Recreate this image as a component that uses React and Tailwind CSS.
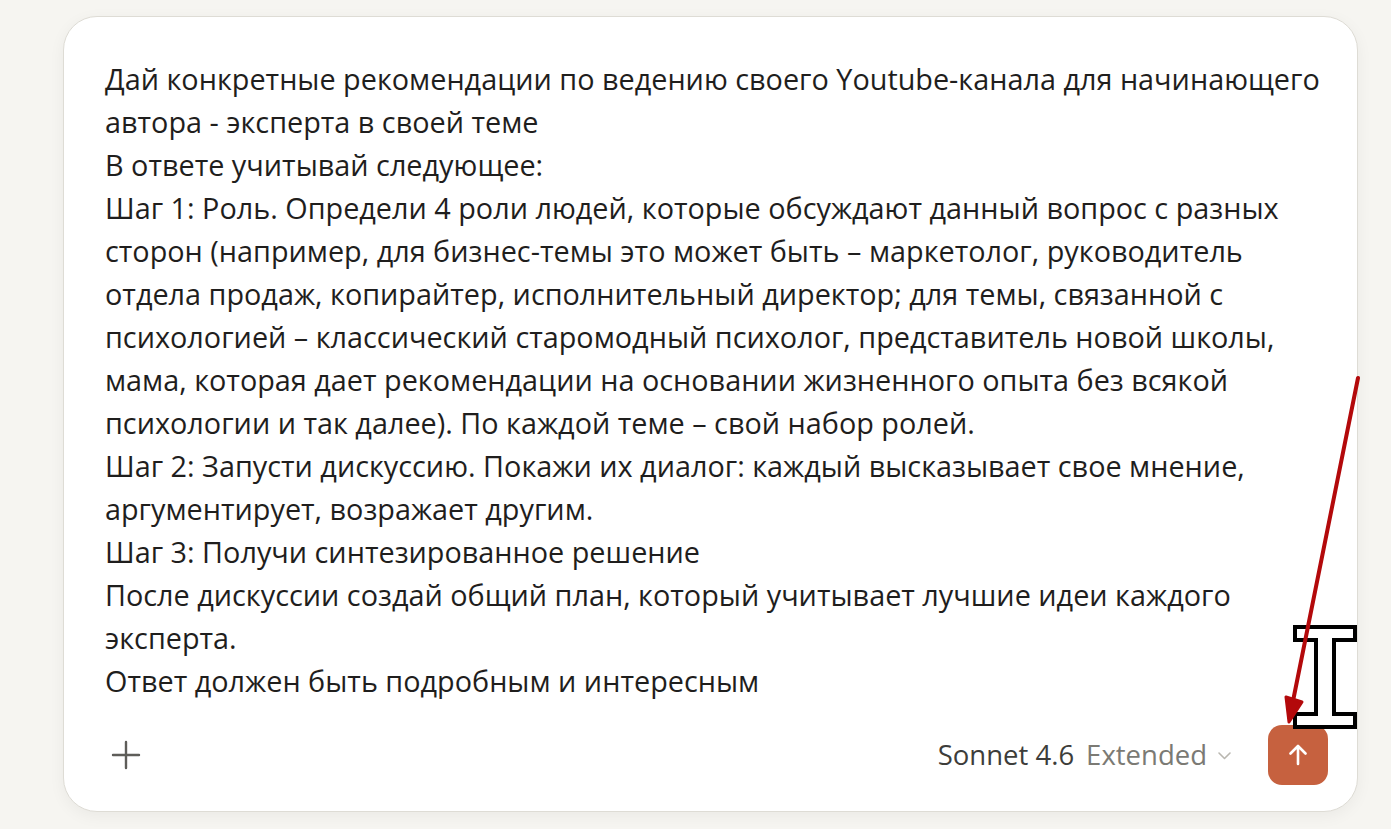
import React from 'react';

const lines = [
    'Дай конкретные рекомендации по ведению своего Youtube-канала для начинающего',
    'автора - эксперта в своей теме',
    'В ответе учитывай следующее:',
    'Шаг 1: Роль. Определи 4 роли людей, которые обсуждают данный вопрос с разных',
    'сторон (например, для бизнес-темы это может быть – маркетолог, руководитель',
    'отдела продаж, копирайтер, исполнительный директор; для темы, связанной с',
    'психологией – классический старомодный психолог, представитель новой школы,',
    'мама, которая дает рекомендации на основании жизненного опыта без всякой',
    'психологии и так далее). По каждой теме – свой набор ролей.',
    'Шаг 2: Запусти дискуссию. Покажи их диалог: каждый высказывает свое мнение,',
    'аргументирует, возражает другим.',
    'Шаг 3: Получи синтезированное решение',
    'После дискуссии создай общий план, который учитывает лучшие идеи каждого',
    'эксперта.',
    'Ответ должен быть подробным и интересным',
];

const App = () => {
    return (
        <div className="relative w-[1391px] h-[829px] overflow-hidden bg-[#f6f5f1] pl-[63px] pt-[16px]">
            {/* Prompt card */}
            <div className="w-[1295px] h-[796px] bg-white border border-[#dedcd5] rounded-[34px] shadow-[0_4px_16px_rgba(0,0,0,0.05)] flex flex-col pl-[41px] pr-[29px] pt-[40px] pb-[26px]">
                <div className="flex-1 font-['Open_Sans',sans-serif] text-[28.8px] leading-[43px] text-[#1f1e1d]">
                    {lines.map((line, i) => (
                        <div key={i} className="whitespace-nowrap">{line}</div>
                    ))}
                </div>

                <div className="flex items-center justify-between">
                    <button className="w-[44px] h-[44px] -ml-[1px] flex items-center justify-center text-[#5e5d59]">
                        <svg width="30" height="30" viewBox="0 0 30 30" fill="none" stroke="currentColor" strokeWidth="2.4" strokeLinecap="round">
                            <path d="M15 2v26M2 15h26" />
                        </svg>
                    </button>

                    <div className="flex items-center">
                        <div className="flex items-center font-['Open_Sans',sans-serif] text-[27.5px] mr-[36px]">
                            <span className="text-[#3d3d3a]">Sonnet 4.6</span>
                            <span className="ml-[12px] text-[#7b7a74]">Extended</span>
                            <svg className="ml-[10px] mt-[2px]" width="15" height="10" viewBox="0 0 15 10" fill="none" stroke="#b9b7b0" strokeWidth="1.6" strokeLinecap="round" strokeLinejoin="round">
                                <path d="M2 2l5.5 5.5L13 2" />
                            </svg>
                        </div>
                        <button className="w-[60px] h-[60px] rounded-[14px] bg-[#c6613f] flex items-center justify-center">
                            <svg width="26" height="26" viewBox="0 0 26 26" fill="none" stroke="white" strokeWidth="2.6" strokeLinecap="round" strokeLinejoin="round">
                                <path d="M13 22V4M5.5 11.5L13 4l7.5 7.5" />
                            </svg>
                        </button>
                    </div>
                </div>
            </div>

            {/* Annotation overlay: red arrow and text cursor */}
            <svg className="absolute inset-0 pointer-events-none" width="1391" height="829" viewBox="0 0 1391 829">
                <path
                    d="M1295 627h60v13h-21v74h21v13h-60v-13h21v-74h-21z"
                    fill="white"
                    stroke="black"
                    strokeWidth="4"
                    strokeLinejoin="miter"
                />
                <line x1="1358" y1="378" x2="1292" y2="706" stroke="#b3090b" strokeWidth="4" strokeLinecap="round" />
                <path d="M1286 697L1289 722L1302 702Z" fill="#b3090b" stroke="#b3090b" strokeWidth="3" strokeLinejoin="round" />
            </svg>
        </div>
    );
};

export default App;
